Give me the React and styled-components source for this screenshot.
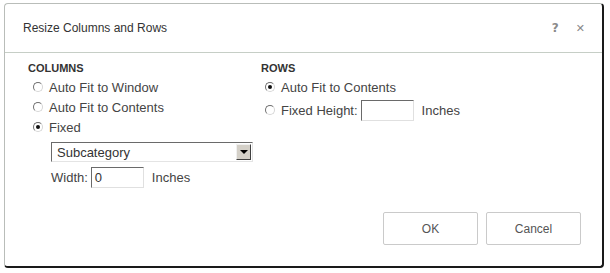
import React from "react";
import styled, { createGlobalStyle } from "styled-components";

const Global = createGlobalStyle`
  html, body { margin: 0; padding: 0; background: #ffffff; }
  body { font-family: "Liberation Sans", Arial, sans-serif; color: #333; }
`;

const Page = styled.div`
  padding: 3px 0 0 4px;
  width: 610px;
  height: 273px;
  box-sizing: border-box;
`;

const Dialog = styled.div`
  width: 600px;
  height: 265px;
  box-sizing: border-box;
  border: 1px solid #b9bdb9;
  border-right: 2px solid #1a1a1a;
  border-bottom: 2px solid #1a1a1a;
  border-radius: 4px;
  background: #fff;
  display: flex;
  flex-direction: column;
`;

const Header = styled.div`
  height: 48px;
  border-bottom: 1px solid #c6cec6;
  display: flex;
  align-items: center;
  padding: 0 17px 0 18px;
`;

const Title = styled.div`
  flex: 1;
  font-size: 12px;
  color: #333;
`;

const HeaderIcon = styled.span`
  font-size: ${(p) => p.$size}px;
  font-weight: bold;
  color: #8a8a8a;
  margin-left: ${(p) => p.$gap}px;
  font-family: "DejaVu Sans", sans-serif;
`;

const Body = styled.div`
  flex: 1;
  display: flex;
  padding: 9px 0 0 23px;
`;

const Group = styled.div`
  width: ${(p) => p.$w}px;
  display: flex;
  flex-direction: column;
`;

const GroupLabel = styled.div`
  font-size: 11px;
  font-weight: bold;
  color: #333;
  line-height: 13px;
  height: 13px;
  margin-bottom: 2px;
`;

const Row = styled.div`
  display: flex;
  align-items: center;
  height: ${(p) => p.$h || 20}px;
  padding-left: ${(p) => p.$indent || 0}px;
  font-size: 13px;
  color: #444;
`;

const Radio = styled.span`
  width: 10px;
  height: 10px;
  box-sizing: border-box;
  border-radius: 50%;
  border: 1px solid;
  border-color: #6e6e6e #d6d6d6 #d6d6d6 #6e6e6e;
  background: #fff;
  margin: 0 6px 0 0;
  display: inline-flex;
  align-items: center;
  justify-content: center;
  &::after {
    content: "";
    width: 4px;
    height: 4px;
    border-radius: 50%;
    background: ${(p) => (p.$checked ? "#111" : "transparent")};
  }
`;

const Select = styled.div`
  width: 202px;
  height: 20px;
  box-sizing: border-box;
  border: 1px solid;
  border-color: #6a6a6a #e4e4e4 #e4e4e4 #6a6a6a;
  display: flex;
  align-items: center;
  font-size: 13px;
  color: #333;
  padding-left: 5px;
`;

const SelectText = styled.span`
  flex: 1;
`;

const DropButton = styled.span`
  width: 15px;
  height: 16px;
  box-sizing: border-box;
  background: #d4d0c8;
  border: 1px solid;
  border-color: #f0f0f0 #404040 #404040 #f0f0f0;
  margin-right: 1px;
  display: flex;
  align-items: center;
  justify-content: center;
  &::after {
    content: "";
    border-left: 4px solid transparent;
    border-right: 4px solid transparent;
    border-top: 4px solid #000;
  }
`;

const Input = styled.div`
  width: ${(p) => p.$w}px;
  height: 21px;
  box-sizing: border-box;
  border: 1px solid;
  border-color: #6a6a6a #e0e0e0 #e0e0e0 #6a6a6a;
  font-size: 13px;
  color: #333;
  display: flex;
  align-items: center;
  padding-left: 3px;
  margin: 0 8px 0 ${(p) => p.$ml || 0}px;
`;

const Footer = styled.div`
  display: flex;
  justify-content: flex-end;
  gap: 8px;
  padding: 0 21px 21px 0;
`;

const Button = styled.div`
  width: 95px;
  height: 33px;
  box-sizing: border-box;
  border: 1px solid #cacaca;
  border-radius: 2px;
  display: flex;
  align-items: center;
  justify-content: center;
  font-size: 12px;
  color: #555;
`;

export default function App() {
  return (
    <>
      <Global />
      <Page>
        <Dialog>
          <Header>
            <Title>Resize Columns and Rows</Title>
            <HeaderIcon $gap={0} $size={12}>?</HeaderIcon>
            <HeaderIcon $gap={17} $size={11}>✕</HeaderIcon>
          </Header>
          <Body>
            <Group $w={233}>
              <GroupLabel>COLUMNS</GroupLabel>
              <Row $indent={5}>
                <Radio />
                Auto Fit to Window
              </Row>
              <Row $indent={5}>
                <Radio />
                Auto Fit to Contents
              </Row>
              <Row $indent={5}>
                <Radio $checked />
                Fixed
              </Row>
              <Row $indent={23} $h={30}>
                <Select>
                  <SelectText>Subcategory</SelectText>
                  <DropButton />
                </Select>
              </Row>
              <Row $indent={23} $h={21}>
                Width:
                <Input $w={53} $ml={3}>0</Input>
                Inches
              </Row>
            </Group>
            <Group $w={300}>
              <GroupLabel>ROWS</GroupLabel>
              <Row $indent={4}>
                <Radio $checked />
                Auto Fit to Contents
              </Row>
              <Row $indent={4} $h={26}>
                <Radio />
                Fixed Height:
                <Input $w={53} $ml={3} />
                Inches
              </Row>
            </Group>
          </Body>
          <Footer>
            <Button>OK</Button>
            <Button>Cancel</Button>
          </Footer>
        </Dialog>
      </Page>
    </>
  );
}
